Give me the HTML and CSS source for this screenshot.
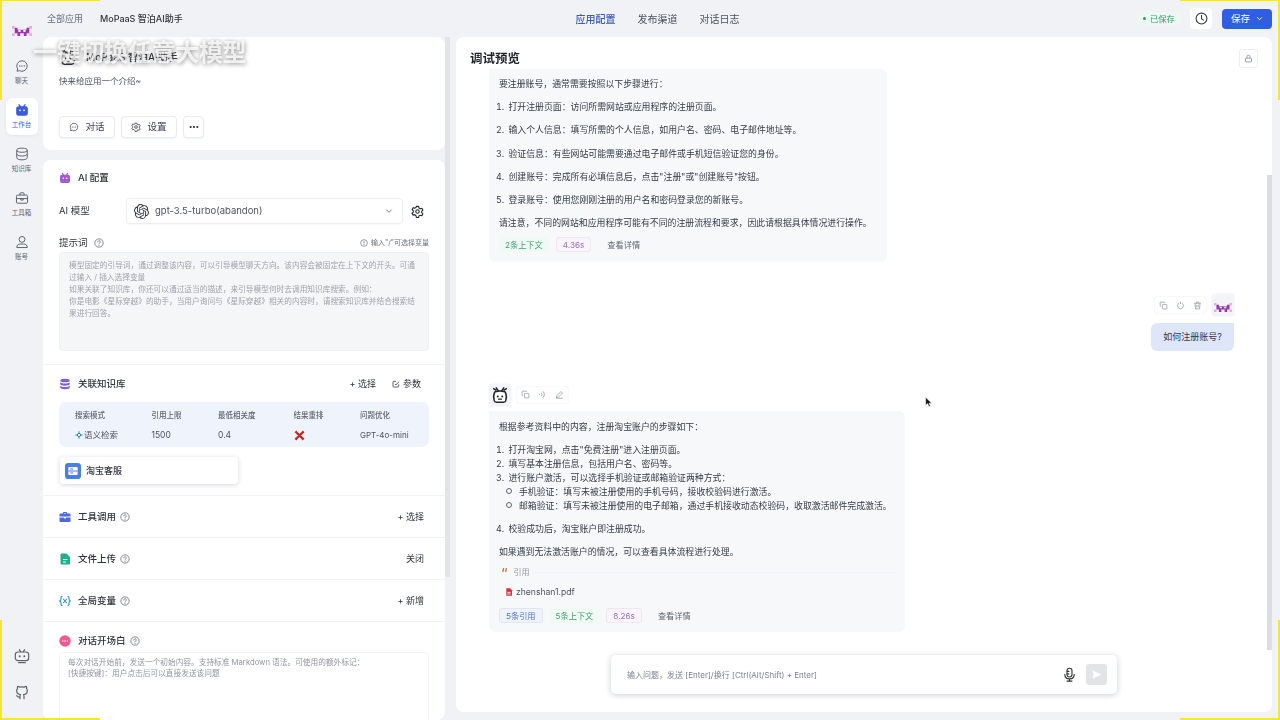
FILE: index.html
```html
<!DOCTYPE html>
<html lang="zh">
<head>
<meta charset="utf-8">
<title>MoPaaS 智泊AI助手</title>
<link rel="stylesheet" href="styles.css">
</head>
<body>
<svg class="defs" width="0" height="0" aria-hidden="true">
  <defs>
    <symbol id="alien" viewBox="0 0 22 13">
      <path fill="#e9a8e6" d="M0 1h3v3H0zM19 1h3v3h-3zM0 9h3v3H0zM19 9h3v3h-3z"/>
      <path fill="#9a36ad" fill-rule="evenodd" d="M3 3h3v2h10V3h3v6h-3v3h-3V9H9v3H6V9H3zM7 5.500v2h2.500v-2zM12.500 5.500v2H15v-2z"/>
    </symbol>
    <symbol id="bot" viewBox="0 0 24 24">
      <path fill="none" stroke="#23262f" stroke-width="2" stroke-linecap="round" d="M7 2.500l3 4.500M17 2.500L14 7M3.500 3.500l3 2M20.500 3.500l-3 2"/>
      <path fill="#fff" stroke="#23262f" stroke-width="2" d="M5 8c4-1.600 10-1.600 14 0 1.500 3 1.700 8 .7 11.500-.4 1.300-1.400 2-2.700 2H7c-1.300 0-2.300-.7-2.700-2C3.300 16 3.500 11 5 8z"/>
      <circle cx="9" cy="14" r="1.300" fill="#23262f"/><circle cx="15" cy="14" r="1.300" fill="#23262f"/>
      <path fill="none" stroke="#23262f" stroke-width="1.500" stroke-linecap="round" d="M10 17.500h4"/>
    </symbol>
    <symbol id="chat" viewBox="0 0 24 24">
      <path fill="none" stroke="currentColor" stroke-width="1.700" d="M12 3a9 9 0 1 1-4.200 17L3.500 21l1-4A9 9 0 0 1 12 3z"/>
      <circle cx="8" cy="12" r="1.200" fill="currentColor"/><circle cx="12" cy="12" r="1.200" fill="currentColor"/><circle cx="16" cy="12" r="1.200" fill="currentColor"/>
    </symbol>
    <symbol id="gear" viewBox="0 0 24 24">
      <path fill="none" stroke="currentColor" stroke-width="2" stroke-linejoin="round" d="M10 2.500h4l.7 3 2.300 1.300 3-.9 2 3.500-2.200 2.100v2.600l2.200 2.100-2 3.500-3-.9-2.300 1.300-.7 3h-4l-.7-3L7 17.800l-3 .9-2-3.500 2.200-2.100v-2.600L2 8.400l2-3.500 3 .9 2.300-1.300z"/>
      <circle cx="12" cy="12" r="3.200" fill="none" stroke="currentColor" stroke-width="2"/>
    </symbol>
    <symbol id="help" viewBox="0 0 24 24">
      <circle cx="12" cy="12" r="10" fill="none" stroke="currentColor" stroke-width="1.800"/>
      <path fill="none" stroke="currentColor" stroke-width="1.800" stroke-linecap="round" d="M9 9.500a3 3 0 1 1 4.500 2.600c-1 .6-1.500 1.100-1.500 2.200"/>
      <circle cx="12" cy="17.500" r="1.200" fill="currentColor"/>
    </symbol>
    <symbol id="copy" viewBox="0 0 24 24">
      <rect x="9" y="9" width="12" height="12" rx="2" fill="none" stroke="currentColor" stroke-width="2"/>
      <path fill="none" stroke="currentColor" stroke-width="2" d="M15 5V4.500A1.500 1.500 0 0 0 13.500 3h-9A1.500 1.500 0 0 0 3 4.500v9A1.500 1.500 0 0 0 4.500 15H5"/>
    </symbol>
  </defs>
</svg>

<div class="app">
  <nav class="nav">
    <div class="nav-logo"><svg class="logo-svg"><use href="#alien"/></svg></div>
    <a class="nav-item"><svg class="nav-icon"><use href="#chat"/></svg><span>聊天</span></a>
    <a class="nav-item active">
      <svg class="nav-icon" viewBox="0 0 24 24"><path fill="#3b5bdb" d="M7 1.500l3.500 4h3l3.500-4 1.600 1.300L16.500 5.600H18a4 4 0 0 1 4 4V18a4 4 0 0 1-4 4H6a4 4 0 0 1-4-4V9.600a4 4 0 0 1 4-4h1.500L5.400 2.800z"/><circle cx="8.500" cy="12.500" r="1.500" fill="#fff"/><circle cx="15.500" cy="12.500" r="1.500" fill="#fff"/></svg>
      <span>工作台</span>
    </a>
    <a class="nav-item">
      <svg class="nav-icon" viewBox="0 0 24 24"><g fill="none" stroke="currentColor" stroke-width="1.700"><ellipse cx="12" cy="5.500" rx="9" ry="3.500"/><path d="M3 5.500v13c0 2 4 3.500 9 3.500s9-1.500 9-3.500v-13M3 12c0 2 4 3.500 9 3.500s9-1.500 9-3.500"/></g></svg>
      <span>知识库</span>
    </a>
    <a class="nav-item">
      <svg class="nav-icon" viewBox="0 0 24 24"><g fill="none" stroke="currentColor" stroke-width="1.700"><rect x="2.500" y="7" width="19" height="14" rx="2"/><path d="M8.500 7V4.500a1.500 1.500 0 0 1 1.500-1.500h4a1.500 1.500 0 0 1 1.500 1.500V7M2.500 13h19M10 13v2.500h4V13"/></g></svg>
      <span>工具箱</span>
    </a>
    <a class="nav-item">
      <svg class="nav-icon" viewBox="0 0 24 24"><g fill="none" stroke="currentColor" stroke-width="1.700"><circle cx="12" cy="7.500" r="5"/><path d="M3 21.500c0-4 2.500-6 6-6h6c3.500 0 6 2 6 6z"/></g></svg>
      <span>账号</span>
    </a>
    <div class="nav-spacer"></div>
    <a class="nav-foot">
      <svg class="foot-icon" viewBox="0 0 24 24"><g fill="none" stroke="#5d6472" stroke-width="1.800" stroke-linecap="round"><path d="M8 2.500l2 3M16 2.500l-2 3"/><rect x="2" y="6" width="20" height="13" rx="4"/><path d="M7 22h10"/></g><circle cx="8.500" cy="12.500" r="1.500" fill="#5d6472"/><circle cx="15.500" cy="12.500" r="1.500" fill="#5d6472"/></svg>
    </a>
    <a class="nav-foot">
      <svg class="foot-icon" viewBox="0 0 24 24"><path fill="none" stroke="#5d6472" stroke-width="1.800" stroke-linecap="round" stroke-linejoin="round" d="M9 22v-3.500c0-1 .2-1.800.8-2.500-3-.4-5.800-1.600-5.800-6 0-1.200.4-2.300 1.200-3.100C5 6 5 4.800 5.400 3.500c1.400 0 2.500.6 3.500 1.300a11 11 0 0 1 6.200 0c1-.7 2.100-1.300 3.500-1.300.4 1.300.4 2.500.2 3.400.8.800 1.200 1.900 1.200 3.100 0 4.400-2.800 5.600-5.800 6 .6.700.8 1.500.8 2.500V22M9 19.500c-3 1-4-.8-5-2"/></svg>
    </a>
  </nav>

  <div class="main">
    <header class="topbar">
      <div class="crumbs"><span class="crumb">全部应用</span><span class="crumb-cur">MoPaaS 智泊AI助手</span></div>
      <div class="tabs"><span class="tab on">应用配置</span><span class="tab">发布渠道</span><span class="tab">对话日志</span></div>
      <div class="top-actions">
        <span class="saved"><i class="dot"></i>已保存</span>
        <button class="clock-btn"><svg class="icon-12" viewBox="0 0 24 24"><circle cx="12" cy="12" r="10" fill="none" stroke="#333a47" stroke-width="2"/><path fill="none" stroke="#333a47" stroke-width="2" stroke-linecap="round" d="M12 6v6.500l3.500 2.500"/></svg></button>
        <button class="save-btn">保存<svg class="icon-7" viewBox="0 0 12 12"><path fill="none" stroke="#fff" stroke-width="1.600" d="M2 4l4 4 4-4"/></svg></button>
      </div>
    </header>

    <div class="workspace">
      <div class="config">
        <section class="card intro">
          <div class="intro-head"><svg class="icon-18"><use href="#bot"/></svg><span>MoPaaS 智泊AI助手</span></div>
          <p class="intro-desc">快来给应用一个介绍~</p>
          <div class="intro-btns">
            <button class="btn btn-m"><svg class="icon-10"><use href="#chat"/></svg>对话</button>
            <button class="btn btn-m"><svg class="icon-10"><use href="#gear"/></svg>设置</button>
            <button class="btn btn-s"><svg class="icon-10" viewBox="0 0 24 24"><circle cx="4" cy="12" r="2.500" fill="#23262f"/><circle cx="12" cy="12" r="2.500" fill="#23262f"/><circle cx="20" cy="12" r="2.500" fill="#23262f"/></svg></button>
          </div>
        </section>

        <section class="card settings">
          <div class="block ai-block">
            <div class="sec-head">
              <svg class="sec-icon" viewBox="0 0 24 24"><path fill="#a35bd0" d="M7 1.500l3.500 4h3l3.500-4 1.600 1.300L16.500 5.600H18a4 4 0 0 1 4 4V18a4 4 0 0 1-4 4H6a4 4 0 0 1-4-4V9.600a4 4 0 0 1 4-4h1.500L5.400 2.800z"/><circle cx="8.500" cy="12.500" r="1.500" fill="#fff"/><circle cx="15.500" cy="12.500" r="1.500" fill="#fff"/></svg>
              <span class="sec-title">AI 配置</span>
            </div>
            <div class="model-row">
              <span class="field-label">AI 模型</span>
              <div class="select">
                <svg class="icon-14" viewBox="0 0 24 24"><path fill="#30343d" d="M22.2819 9.8211a5.9847 5.9847 0 0 0-.5157-4.9108 6.0462 6.0462 0 0 0-6.5098-2.9A6.0651 6.0651 0 0 0 4.9807 4.1818a5.9847 5.9847 0 0 0-3.9977 2.9 6.0462 6.0462 0 0 0 .7427 7.0966 5.98 5.98 0 0 0 .511 4.9107 6.051 6.051 0 0 0 6.5146 2.9001A5.9847 5.9847 0 0 0 13.2599 24a6.0557 6.0557 0 0 0 5.7718-4.2058 5.9894 5.9894 0 0 0 3.9977-2.9001 6.0557 6.0557 0 0 0-.7475-7.0729zm-9.022 12.6081a4.4755 4.4755 0 0 1-2.8764-1.0408l.1419-.0804 4.7783-2.7582a.7948.7948 0 0 0 .3927-.6813v-6.7369l2.02 1.1686a.071.071 0 0 1 .038.052v5.5826a4.504 4.504 0 0 1-4.4945 4.4944zm-9.6607-4.1254a4.4708 4.4708 0 0 1-.5346-3.0137l.142.0852 4.783 2.7582a.7712.7712 0 0 0 .7806 0l5.8428-3.3685v2.3324a.0804.0804 0 0 1-.0332.0615L9.74 19.9502a4.4992 4.4992 0 0 1-6.1408-1.6464zM2.3408 7.8956a4.485 4.485 0 0 1 2.3655-1.9728V11.6a.7664.7664 0 0 0 .3879.6765l5.8144 3.3543-2.0201 1.1685a.0757.0757 0 0 1-.071 0l-4.8303-2.7865A4.504 4.504 0 0 1 2.3408 7.872zm16.5963 3.8558L13.1038 8.364 15.1192 7.2a.0757.0757 0 0 1 .071 0l4.8303 2.7913a4.4944 4.4944 0 0 1-.6765 8.1042v-5.6772a.79.79 0 0 0-.407-.667zm2.0107-3.0231l-.142-.0852-4.7735-2.7818a.7759.7759 0 0 0-.7854 0L9.409 9.2297V6.8974a.0662.0662 0 0 1 .0284-.0615l4.8303-2.7866a4.4992 4.4992 0 0 1 6.6802 4.66zM8.3065 12.863l-2.02-1.1638a.0804.0804 0 0 1-.038-.0567V6.0742a4.4992 4.4992 0 0 1 7.3757-3.4537l-.142.0805L8.704 5.459a.7948.7948 0 0 0-.3927.6813zm1.0976-2.3654l2.602-1.4998 2.6069 1.4998v2.9994l-2.5974 1.4997-2.6067-1.4997Z"/></svg>
                <span class="select-text">gpt-3.5-turbo(abandon)</span>
                <svg class="icon-8 chevron" viewBox="0 0 12 12"><path fill="none" stroke="#667085" stroke-width="1.400" d="M2 4l4 4 4-4"/></svg>
              </div>
              <svg class="icon-13 gear-dark"><use href="#gear"/></svg>
            </div>
            <div class="prompt-head">
              <span class="field-label">提示词</span><svg class="icon-10 help"><use href="#help"/></svg>
              <span class="prompt-hint"><svg class="icon-8" viewBox="0 0 24 24"><circle cx="12" cy="12" r="10" fill="none" stroke="#667085" stroke-width="2"/><path stroke="#667085" stroke-width="2.400" d="M12 6.500v7M12 15.500v2.500"/></svg>输入"/"可选择变量</span>
            </div>
            <div class="textarea prompt">模型固定的引导词，通过调整该内容，可以引导模型聊天方向。该内容会被固定在上下文的开头。可通过输入 / 插入选择变量<br>如果关联了知识库，你还可以通过适当的描述，来引导模型何时去调用知识库搜索。例如：<br>你是电影《星际穿越》的助手，当用户询问与《星际穿越》相关的内容时，请搜索知识库并结合搜索结果进行回答。</div>
          </div>

          <div class="block kb-block">
            <div class="sec-head">
              <svg class="sec-icon" viewBox="0 0 24 24"><g fill="#7a5fd8"><ellipse cx="12" cy="5" rx="9.500" ry="3.500"/><path d="M2.500 8.500C4 10.500 8 11 12 11s8-.5 9.500-2.500V12c0 2-4 3.500-9.500 3.500S2.500 14 2.500 12zM2.500 15.500C4 17.500 8 18 12 18s8-.5 9.500-2.500V19c0 2-4 3.500-9.500 3.500S2.500 21 2.500 19z"/></g></svg>
              <span class="sec-title">关联知识库</span>
              <span class="sec-act first">+ 选择</span>
              <span class="sec-act"><svg class="icon-8" viewBox="0 0 24 24"><path fill="none" stroke="#333a47" stroke-width="2.400" d="M20 13v6a2 2 0 0 1-2 2H5a2 2 0 0 1-2-2V6a2 2 0 0 1 2-2h7M9 12l2.500 3L21 5"/></svg>参数</span>
            </div>
            <div class="kb-table">
              <span class="th">搜索模式</span><span class="th">引用上限</span><span class="th">最低相关度</span><span class="th">结果重排</span><span class="th">问题优化</span>
              <span class="td"><svg class="icon-8" viewBox="0 0 24 24"><g fill="none" stroke="#2f8fb0" stroke-width="3"><circle cx="12" cy="12" r="5"/><path d="M12 1v6M12 17v6M1 12h6M17 12h6"/></g></svg>语义检索</span><span class="td">1500</span><span class="td">0.4</span>
              <span class="td"><svg class="icon-11" viewBox="0 0 24 24"><path stroke="#d4202b" stroke-width="5" d="M3 3l18 18M21 3L3 21"/></svg></span><span class="td td-sm">GPT-4o-mini</span>
            </div>
            <div class="kb-chip">
              <svg class="chip-icon" viewBox="0 0 24 24"><rect width="24" height="24" rx="5" fill="#4a7fe0"/><rect x="5" y="6" width="14" height="12" rx="1.500" fill="#fff"/><path stroke="#4a7fe0" stroke-width="1.800" d="M5 12h14M8 9h4M8 15h4"/></svg>
              <span>淘宝客服</span>
            </div>
          </div>

          <div class="block row-block">
            <div class="sec-head">
              <svg class="sec-icon" viewBox="0 0 24 24"><path fill="#4c68dc" d="M8 5V3.500A1.500 1.500 0 0 1 9.500 2h5A1.500 1.500 0 0 1 16 3.500V5h5a2 2 0 0 1 2 2v4H1V7a2 2 0 0 1 2-2zm2 0h4V4h-4zM1 13h9v2h4v-2h9v7a2 2 0 0 1-2 2H3a2 2 0 0 1-2-2z"/></svg>
              <span class="sec-title">工具调用</span><svg class="icon-10 help"><use href="#help"/></svg>
              <span class="sec-act first">+ 选择</span>
            </div>
          </div>
          <div class="block row-block">
            <div class="sec-head">
              <svg class="sec-icon" viewBox="0 0 24 24"><path fill="#22ad8c" d="M5 1h10l7 7v13a2 2 0 0 1-2 2H5a2 2 0 0 1-2-2V3a2 2 0 0 1 2-2z"/><path stroke="#fff" stroke-width="2" d="M8 13h9M8 18h6"/></svg>
              <span class="sec-title">文件上传</span><svg class="icon-10 help"><use href="#help"/></svg>
              <span class="sec-act first">关闭</span>
            </div>
          </div>
          <div class="block row-block">
            <div class="sec-head">
              <svg class="sec-icon" viewBox="0 0 24 24"><g fill="none" stroke="#2a8fb5" stroke-width="2.200" stroke-linecap="round"><path d="M6 3C3.500 3 4 6 4 8s0 3-2.500 4C4 13 4 14 4 16s-.5 5 2 5M18 3c2.500 0 2 3 2 5s0 3 2.500 4C20 13 20 14 20 16s.5 5-2 5M9 8.500l6 7M15 8.500l-6 7"/></g></svg>
              <span class="sec-title">全局变量</span><svg class="icon-10 help"><use href="#help"/></svg>
              <span class="sec-act first">+ 新增</span>
            </div>
          </div>
          <div class="block open-block">
            <div class="sec-head">
              <svg class="sec-icon" viewBox="0 0 24 24"><circle cx="12" cy="12" r="11.500" fill="#ec5b8d"/><circle cx="7.500" cy="12" r="1.300" fill="#fff"/><circle cx="12" cy="12" r="1.300" fill="#fff"/><circle cx="16.500" cy="12" r="1.300" fill="#fff"/></svg>
              <span class="sec-title">对话开场白</span><svg class="icon-10 help"><use href="#help"/></svg>
            </div>
            <div class="textarea opener">每次对话开始前，发送一个初始内容。支持标准 Markdown 语法。可使用的额外标记：<br>[快捷按键]：用户点击后可以直接发送该问题</div>
          </div>
        </section>
      </div>

      <div class="left-scroll"></div>

      <section class="preview">
        <div class="preview-head">
          <h2>调试预览</h2>
          <button class="lock-btn"><svg class="icon-9" viewBox="0 0 24 24"><g fill="none" stroke="#7b8292" stroke-width="2"><path d="M8 11V7a4 4 0 0 1 8 0v4"/><rect x="4" y="11" width="16" height="10" rx="1.500"/></g></svg></button>
        </div>
        <div class="chat">
          <div class="bubble bot-one">
            <p>要注册账号，通常需要按照以下步骤进行：</p>
            <ol class="steps wide">
              <li>打开注册页面：访问所需网站或应用程序的注册页面。</li>
              <li>输入个人信息：填写所需的个人信息，如用户名、密码、电子邮件地址等。</li>
              <li>验证信息：有些网站可能需要通过电子邮件或手机短信验证您的身份。</li>
              <li>创建账号：完成所有必填信息后，点击"注册"或"创建账号"按钮。</li>
              <li>登录账号：使用您刚刚注册的用户名和密码登录您的新账号。</li>
            </ol>
            <p>请注意，不同的网站和应用程序可能有不同的注册流程和要求，因此请根据具体情况进行操作。</p>
            <div class="tags"><span class="tag green">2条上下文</span><span class="tag purple">4.36s</span><span class="tag plain">查看详情</span></div>
          </div>

          <div class="user-msg">
            <div class="msg-top">
              <div class="tool-group">
                <svg class="icon-9"><use href="#copy"/></svg>
                <svg class="icon-9" viewBox="0 0 24 24"><path fill="none" stroke="currentColor" stroke-width="2" stroke-linecap="round" d="M12 3v4M6.500 6.500a8 8 0 1 0 11 0"/></svg>
                <svg class="icon-9" viewBox="0 0 24 24"><path fill="none" stroke="currentColor" stroke-width="2" d="M3 6h18M9 6V3h6v3M5.500 6l1 15h11l1-15M10 10v7M14 10v7"/></svg>
              </div>
              <div class="avatar"><svg class="avatar-alien"><use href="#alien"/></svg></div>
            </div>
            <div class="user-bubble">如何注册账号?</div>
          </div>

          <div class="bot-head">
            <div class="avatar"><svg class="icon-18"><use href="#bot"/></svg></div>
            <div class="tool-group">
              <svg class="icon-9"><use href="#copy"/></svg>
              <svg class="icon-9" viewBox="0 0 24 24"><path fill="none" stroke="currentColor" stroke-width="2.200" stroke-linecap="round" d="M4 12h.5M9 8c2 2.500 2 5.500 0 8M14 4.500c4 4.500 4 10.500 0 15"/></svg>
              <svg class="icon-9" viewBox="0 0 24 24"><path fill="none" stroke="currentColor" stroke-width="2" stroke-linejoin="round" d="M4 20l1-5L16 4l4 4L9 19zM3 22h18"/></svg>
            </div>
          </div>
          <div class="bubble bot-two">
            <p>根据参考资料中的内容，注册淘宝账户的步骤如下：</p>
            <ol class="steps tight">
              <li>打开淘宝网，点击"免费注册"进入注册页面。</li>
              <li>填写基本注册信息，包括用户名、密码等。</li>
              <li>进行账户激活，可以选择手机验证或邮箱验证两种方式：
                <ul class="sub">
                  <li>手机验证：填写未被注册使用的手机号码，接收校验码进行激活。</li>
                  <li>邮箱验证：填写未被注册使用的电子邮箱，通过手机接收动态校验码，收取激活邮件完成激活。</li>
                </ul>
              </li>
              <li>校验成功后，淘宝账户即注册成功。</li>
            </ol>
            <p>如果遇到无法激活账户的情况，可以查看具体流程进行处理。</p>
            <div class="cite-head"><span class="quote">“</span><span>引用</span><i class="cite-line"></i></div>
            <div class="cite-file"><svg class="icon-8" viewBox="0 0 24 24"><path fill="#d8303c" d="M4 1h11l6 6v16H4z"/><path stroke="#fff" stroke-width="2.500" d="M7 13h10M7 18h10"/></svg>zhenshan1.pdf</div>
            <div class="tags"><span class="tag blue">5条引用</span><span class="tag green">5条上下文</span><span class="tag purple">8.26s</span><span class="tag plain">查看详情</span></div>
          </div>
        </div>
        <div class="input-box">
          <span class="input-ph">输入问题，发送 [Enter]/换行 [Ctrl(Alt/Shift) + Enter]</span>
          <svg class="mic" viewBox="0 0 24 24"><g fill="none" stroke="#30343d" stroke-width="1.800" stroke-linecap="round"><rect x="8" y="2" width="8" height="14" rx="4"/><path d="M4.500 11.500c0 5 3.500 7.500 7.500 7.500s7.500-2.500 7.500-7.500M12 19v3M8 22.500h8M8.500 7H11M8.500 11H11"/></g></svg>
          <span class="send"><svg class="icon-11" viewBox="0 0 24 24"><path fill="#fff" d="M3 3l19 9-19 9 3-9z"/></svg></span>
        </div>
        <div class="right-scroll"></div>
      </section>
    </div>
  </div>
</div>

<div class="caption">一键切换任意大模型</div>
<svg class="cursor" viewBox="0 0 12 16"><path fill="#111" stroke="#fff" stroke-width=".8" d="M1 1v12l3-2.800L6 15l2-1-2-4.300h4z"/></svg>
<i class="mark m-tl-h"></i><i class="mark m-tl-v"></i>
<i class="mark m-tr-h"></i><i class="mark m-tr-v"></i>
<i class="mark m-bl-h"></i><i class="mark m-bl-v"></i>
<i class="mark m-br-h"></i><i class="mark m-br-v"></i>
</body>
</html>
```

FILE: styles.css
```css
* { box-sizing: border-box; }
html, body { margin: 0; height: 720px; overflow: hidden; }
body {
  position: relative;
  width: 1280px;
  background: #f1f2f5;
  color: #333a47;
  font-family: Inter, "Noto Sans CJK SC", "Noto Sans", sans-serif;
  font-size: 9px;
  line-height: 14px;
}
.defs { position: absolute; }
button { font: inherit; color: inherit; cursor: pointer; }
p { margin: 0; }

.app { display: flex; height: 720px; filter: blur(.45px); }

/* icon sizes */
.icon-7 { width: 7px; height: 7px; }
.icon-8 { width: 8px; height: 8px; flex: none; }
.icon-9 { width: 9px; height: 9px; flex: none; }
.icon-10 { width: 10px; height: 10px; flex: none; }
.icon-11 { width: 11px; height: 11px; flex: none; }
.icon-12 { width: 13px; height: 13px; flex: none; }
.icon-13 { width: 13px; height: 13px; flex: none; }
.icon-14 { width: 15px; height: 15px; flex: none; }
.icon-18 { width: 18px; height: 18px; flex: none; }

/* nav */
.nav { width: 43px; flex: none; display: flex; flex-direction: column; align-items: center; background: #f1f2f5; }
.nav-logo { height: 54px; padding-top: 25px; }
.logo-svg { width: 20px; height: 12px; display: block; }
.nav-item {
  width: 32px; height: 37px; margin-bottom: 7px;
  display: flex; flex-direction: column; align-items: center; justify-content: center;
  border-radius: 6px; color: #5d6472; font-size: 6.5px; line-height: 9px;
}
.nav-item.active { background: #fff; color: #3b5bdb; box-shadow: 0 1px 3px rgba(30, 40, 80, .06); }
.nav-icon { width: 14px; height: 14px; margin-bottom: 4px; }
.nav-spacer { flex: 1; }
.nav-foot { height: 36px; display: flex; align-items: center; justify-content: center; }
.nav-foot:last-of-type { margin-bottom: 10px; }
.foot-icon { width: 16px; height: 16px; }

/* top bar */
.main { flex: 1; min-width: 0; display: flex; flex-direction: column; }
.topbar { height: 37px; flex: none; display: grid; grid-template-columns: 1fr auto 1fr; align-items: center; padding: 0 8px 0 4px; }
.crumbs { display: flex; gap: 17px; font-size: 9px; }
.crumb { color: #667085; }
.crumb-cur { color: #30343d; font-weight: 500; }
.tabs { display: flex; gap: 22px; margin-right: 4px; font-size: 10px; color: #4a5160; }
.tab.on { color: #3a5bb8; font-weight: 500; }
.top-actions { display: flex; justify-content: flex-end; align-items: center; }
.saved { display: flex; align-items: center; gap: 4px; height: 13px; padding: 0 6px; margin-right: 9px; border-radius: 3px; background: #ecf8f1; color: #2f9e6e; font-size: 8.4px; }
.dot { width: 3px; height: 3px; border-radius: 50%; background: #22a06b; }
.clock-btn { width: 22px; height: 21px; margin-right: 10px; padding: 0; display: flex; align-items: center; justify-content: center; border: 0; border-radius: 4px; background: #fff; }
.save-btn { width: 50px; height: 20px; padding: 0; display: flex; align-items: center; justify-content: center; gap: 6px; border: 0; border-radius: 4px; background: #2f5fe0; color: #fff; font-size: 9.500px; }

/* workspace */
.workspace { flex: 1; min-height: 0; display: flex; }
.config { width: 402px; flex: none; display: flex; flex-direction: column; gap: 10px; overflow: hidden; }
.left-scroll { width: 5px; height: 540px; flex: none; background: #e3e4e8; }
.card { background: #fff; border-radius: 8px; }
.intro { height: 113px; flex: none; padding: 11px 16px 0; }
.intro-head { display: flex; align-items: center; gap: 9px; font-size: 10px; font-weight: 500; color: #30343d; }
.intro-desc { margin-top: 8px; font-size: 8.500px; color: #4a5160; }
.intro-btns { display: flex; gap: 6px; margin-top: 28px; }
.btn { height: 22px; display: flex; align-items: center; justify-content: center; gap: 6px; padding: 0; background: #fff; border: 1px solid #e8ebf0; border-radius: 4px; font-size: 9.500px; color: #3b4150; box-shadow: 0 1px 2px rgba(20, 30, 60, .06); }
.btn-m { width: 56px; }
.btn-s { width: 21px; }
.settings { flex: 1; min-height: 0; overflow: hidden; }

/* blocks */
.block { padding: 0 16px; border-bottom: 1px solid #f1f2f4; }
.ai-block { height: 205px; padding-top: 11px; }
.kb-block { height: 131px; padding-top: 12px; }
.row-block { height: 42px; padding-top: 14px; }
.open-block { padding-top: 12px; border: 0; }
.sec-head { display: flex; align-items: center; height: 14px; font-size: 9.500px; color: #30343d; }
.sec-icon { width: 12px; height: 12px; flex: none; margin-right: 7px; }
.sec-title { font-weight: 500; margin-right: 4px; }
.help { color: #5d6472; }
.sec-act { display: flex; align-items: center; gap: 3px; font-size: 9px; margin-right: 5px; margin-left: 11px; }
.sec-act.first { margin-left: auto; }
.kb-block .sec-act { margin-right: 8px; margin-left: 8px; }
.kb-block .sec-act.first { margin-left: auto; }

.model-row { display: flex; align-items: center; margin-top: 13px; height: 26px; }
.field-label { font-size: 9.500px; color: #30343d; }
.model-row .field-label { width: 67px; }
.select { width: 277px; height: 26px; display: flex; align-items: center; padding: 0 9px 0 7px; gap: 6px; border: 1px solid #eceef2; border-radius: 4px; font-size: 9.500px; color: #4a5160; box-shadow: 0 1px 2px rgba(20, 30, 60, .04); }
.select-text { flex: 1; }
.gear-dark { margin-left: 8px; color: #23262f; }
.prompt-head { display: flex; align-items: center; gap: 6px; margin-top: 12px; height: 14px; }
.prompt-hint { margin-left: auto; display: flex; align-items: center; gap: 3px; font-size: 7px; color: #667085; }
.textarea { font-size: 7.700px; line-height: 12px; color: #9ea3ad; border-radius: 4px; }
.prompt { height: 99px; margin-top: 2px; padding: 7px 9px; background: #f5f6f8; border: 1px solid #eff0f3; }
.kb-table {
  display: grid; grid-template-columns: 76.5px 66.500px 75.500px 66.500px 1fr; grid-template-rows: 14px 14px;
  row-gap: 5px; align-items: center; height: 45px; margin-top: 11px; padding: 7px 0 0 16px;
  background: #eff3fb; border-radius: 7px;
}
.th { font-size: 7.500px; color: #5d6472; font-weight: 500; }
.td { display: flex; align-items: center; gap: 1px; font-size: 8.500px; color: #4a5160; }
.td-sm { font-size: 8px; }
.kb-chip { width: 178px; height: 27px; margin: 10px 0 0 1px; padding: 0 5px; display: flex; align-items: center; gap: 5px; background: #fff; border-radius: 4px; font-size: 9px; font-weight: 500; box-shadow: 0 1px 5px rgba(20, 30, 60, .18); }
.chip-icon { width: 16px; height: 16px; }
.opener { height: 80px; margin-top: 4px; padding: 4px 8px; line-height: 11px; background: #fff; border: 1px solid #f1f2f5; color: #8f95a1; }

/* preview */
.preview { position: relative; flex: none; width: 816px; height: 675px; margin-left: 6px; display: flex; flex-direction: column; background: #fff; border-radius: 8px; overflow: hidden; }
.preview-head { height: 32px; flex: none; padding: 12px 14px 0; display: flex; justify-content: space-between; align-items: flex-start; }
.preview-head h2 { margin: 1px 0 0; font-size: 12.500px; line-height: 18px; font-weight: 700; color: #1f232b; }
.lock-btn { width: 19px; height: 19px; padding: 0; display: flex; align-items: center; justify-content: center; background: #fff; border: 1px solid #eceef2; border-radius: 3px; }
.chat { flex: 1; min-height: 0; overflow: hidden; padding: 0 38px 0 33px; }
.bubble { width: fit-content; padding: 8px 10px; background: #f7f8fa; border-radius: 0 6px 6px 6px; font-size: 8.900px; line-height: 14px; color: #333a47; }
.bot-one { width: 398px; height: 193px; }
.bot-two { width: 416px; height: 221px; margin-top: 6px; padding-top: 9px; }
.steps { margin: 0 0 0 -4px; padding: 0 0 0 13.500px; }
.steps > li::marker { content: counter(list-item) ".\2002"; }
.steps.wide { margin-top: 9px; }
.steps.wide li { margin-bottom: 9.300px; }
.steps.tight { margin-top: 9px; margin-bottom: 9px; }
.sub { margin: 0 0 9px -13.500px; padding: 0 0 0 22px; list-style: none; white-space: nowrap; }
.sub li::before { content: ""; display: inline-block; width: 4px; height: 4px; margin: 0 7px 1px -11px; border: 1px solid #5d6472; border-radius: 50%; }
.tags { display: flex; gap: 7px; align-items: center; margin-top: 7px; font-size: 8.200px; }
.tag { height: 15px; padding: 0 6px; display: flex; align-items: center; border-radius: 3px; }
.tag.green { background: #f0faf5; color: #3f9e78; }
.tag.purple { background: #faf4fb; color: #9a72b8; border: 1px solid #f1e6f4; }
.tag.blue { background: #eff3fd; color: #4f75cc; border: 1px solid #dfe6f6; }
.tag.plain { margin-left: 3px; color: #5d6472; }
.cite-head { display: flex; align-items: center; gap: 6px; margin-top: 6px; font-size: 8px; color: #8f95a1; }
.quote { color: #c4803e; font-size: 12px; line-height: 8px; height: 6px; font-weight: 700; margin-left: 2px; }
.cite-line { flex: 1; height: 1px; background: #eff0f3; }
.cite-file { display: flex; align-items: center; gap: 3px; margin-top: 6px; padding-left: 6px; font-size: 8.600px; color: #4a5160; }
.bot-two .tags { margin-top: 9px; }
.user-msg { margin-top: 32px; height: 57px; display: flex; flex-direction: column; align-items: flex-end; }
.msg-top { display: flex; align-items: center; gap: 6px; height: 22px; }
.tool-group { display: flex; align-items: center; gap: 8px; height: 16px; padding: 0 4px; color: #8f95a1; background: #fff; border-radius: 3px; box-shadow: 0 0 2px rgba(20, 30, 60, .12); }
.avatar { width: 22px; height: 22px; display: flex; align-items: center; justify-content: center; border-radius: 3px; background: #f3f4f8; box-shadow: 0 0 2px rgba(20, 30, 60, .1); }
.avatar-alien { width: 18px; height: 11px; margin-top: 4px; }
.user-bubble { margin-top: 7px; height: 28px; width: 83px; display: flex; align-items: center; justify-content: center; background: #dee6fa; border-radius: 6px 0 6px 6px; font-size: 9px; color: #333a47; }
.bot-head { margin-top: 33px; display: flex; align-items: center; gap: 6px; height: 21px; }
.input-box { position: absolute; left: 155px; top: 618px; width: 506px; height: 39px; display: flex; align-items: center; padding: 0 10px 0 16px; background: #fff; border-radius: 5px; box-shadow: 0 1px 6px rgba(20, 30, 60, .22); }
.input-ph { flex: 1; font-size: 8px; color: #7b8292; }
.mic { width: 15px; height: 15px; margin-right: 9px; }
.send { width: 21px; height: 21px; display: flex; align-items: center; justify-content: center; background: #e2e4e8; border-radius: 3px; }
.right-scroll { position: absolute; right: 0; top: 138px; width: 5px; height: 475px; background: #dcdde0; }

/* overlay caption */
.caption { position: absolute; left: 33px; top: 37px; font-size: 24px; line-height: 32px; font-weight: 700; color: rgba(255, 255, 255, .78); text-shadow: 0 0 4px rgba(90, 90, 90, .4), 1px 2px 4px rgba(90, 90, 90, .35); letter-spacing: -.3px; white-space: nowrap; filter: blur(.7px); }
.cursor { position: absolute; left: 925px; top: 396px; width: 8px; height: 12px; }
.mark { position: absolute; background: #f5e633; }
.m-tl-h, .m-tr-h { top: 0; width: 100px; height: 1px; }
.m-bl-h, .m-br-h { bottom: 0; width: 100px; height: 2px; }
.m-tl-v, .m-tr-v { top: 0; width: 2px; height: 100px; }
.m-bl-v, .m-br-v { bottom: 0; width: 2px; height: 100px; }
.m-tl-h, .m-tl-v, .m-bl-h, .m-bl-v { left: 0; }
.m-tr-h, .m-tr-v, .m-br-h, .m-br-v { right: 0; }
```
